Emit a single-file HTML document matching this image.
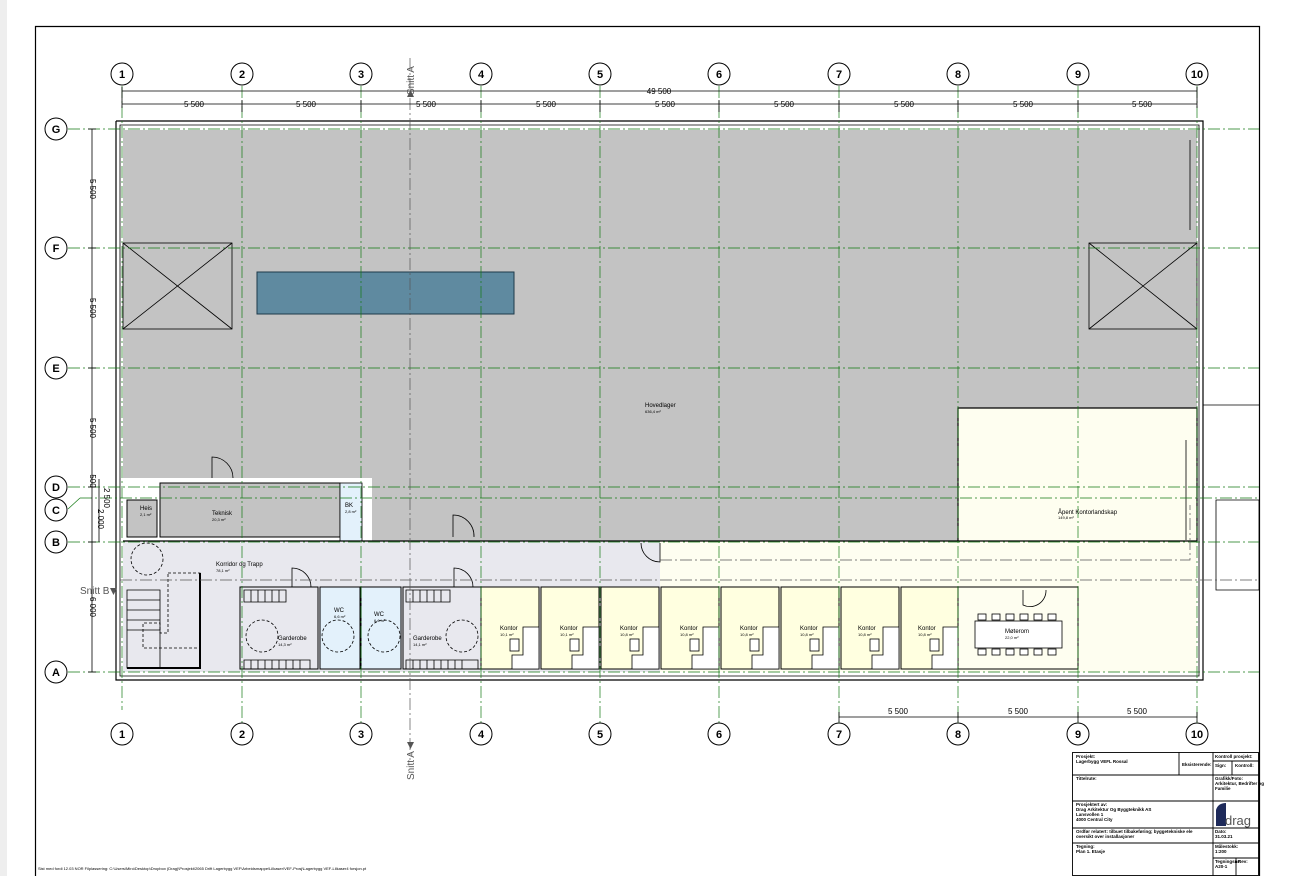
<!DOCTYPE html>
<html><head><meta charset="utf-8"><style>
html,body{margin:0;padding:0;background:#fff;}
svg{display:block;font-family:"Liberation Sans",sans-serif;}
</style></head><body>
<svg width="1289" height="876" viewBox="0 0 1289 876" xmlns="http://www.w3.org/2000/svg">
<rect x="0" y="0" width="1289" height="876" fill="#fff"/>
<rect x="0" y="0" width="7" height="876" fill="#eee"/>
<path d="M35.5 876 V26.5 H1259.5 V876" fill="none" stroke="#000" stroke-width="1.2"/>

<path d="M123 130 H1197 V408 H958 V541 H372 V478 H123 Z" fill="#c3c3c3"/>
<rect x="160" y="483" width="180" height="54" fill="#c3c3c3" stroke="#000" stroke-width="1"/>
<rect x="127" y="500" width="30" height="37" fill="#c3c3c3" stroke="#000" stroke-width="1"/>
<rect x="340" y="483" width="22" height="58" fill="#e3f1fb" stroke="#000" stroke-width="0.8"/>
<rect x="123" y="541" width="537" height="131" fill="#e8e8ee"/>
<rect x="660" y="541" width="537" height="131" fill="#fefef0"/>
<rect x="958" y="408" width="239" height="133" fill="#fefef0"/>
<rect x="240" y="587" width="78" height="82" fill="#e8e8ee" stroke="#000" stroke-width="1"/>
<rect x="320" y="587" width="40" height="82" fill="#e3f1fb" stroke="#000" stroke-width="1"/>
<rect x="361" y="587" width="40" height="82" fill="#e3f1fb" stroke="#000" stroke-width="1"/>
<rect x="403" y="587" width="78" height="82" fill="#e8e8ee" stroke="#000" stroke-width="1"/>
<g fill="#ffffe0" stroke="#000" stroke-width="1">
<rect x="481" y="587" width="58" height="82"/><rect x="541" y="587" width="58" height="82"/>
<rect x="601" y="587" width="58" height="82"/><rect x="661" y="587" width="58" height="82"/>
<rect x="721" y="587" width="58" height="82"/><rect x="781" y="587" width="58" height="82"/>
<rect x="841" y="587" width="58" height="82"/><rect x="901" y="587" width="57" height="82"/>
</g>
<rect x="958" y="587" width="120" height="82" fill="#fefef0" stroke="#000" stroke-width="1"/>
<g fill="#fff" stroke="#000" stroke-width="0.8">
<path d="M523 627 H539 V669 H512 V655 H523 Z"/><path d="M583 627 H599 V669 H572 V655 H583 Z"/>
<path d="M643 627 H659 V669 H632 V655 H643 Z"/><path d="M703 627 H719 V669 H692 V655 H703 Z"/>
<path d="M763 627 H779 V669 H752 V655 H763 Z"/><path d="M823 627 H839 V669 H812 V655 H823 Z"/>
<path d="M883 627 H899 V669 H872 V655 H883 Z"/><path d="M943 627 H958 V669 H932 V655 H943 Z"/>
<rect x="510" y="639" width="9" height="12"/><rect x="570" y="639" width="9" height="12"/>
<rect x="630" y="639" width="9" height="12"/><rect x="690" y="639" width="9" height="12"/>
<rect x="750" y="639" width="9" height="12"/><rect x="810" y="639" width="9" height="12"/>
<rect x="870" y="639" width="9" height="12"/><rect x="930" y="639" width="9" height="12"/>
<rect x="975" y="621" width="87" height="27"/>
<rect x="978" y="614" width="8" height="6"/><rect x="992" y="614" width="8" height="6"/><rect x="1006" y="614" width="8" height="6"/><rect x="1020" y="614" width="8" height="6"/><rect x="1034" y="614" width="8" height="6"/><rect x="1048" y="614" width="8" height="6"/>
<rect x="978" y="649" width="8" height="6"/><rect x="992" y="649" width="8" height="6"/><rect x="1006" y="649" width="8" height="6"/><rect x="1020" y="649" width="8" height="6"/><rect x="1034" y="649" width="8" height="6"/><rect x="1048" y="649" width="8" height="6"/>
</g>
<g fill="none" stroke="#000" stroke-width="0.8">
<path d="M244 590 H286 V602 H244 Z M251 590 V602 M258 590 V602 M265 590 V602 M272 590 V602 M279 590 V602"/>
<path d="M244 660 H310 V669 H244 Z M251 660 V669 M258 660 V669 M265 660 V669 M272 660 V669 M279 660 V669 M286 660 V669 M293 660 V669 M300 660 V669"/>
<path d="M406 590 H450 V602 H406 Z M413 590 V602 M420 590 V602 M427 590 V602 M434 590 V602 M441 590 V602"/>
<path d="M406 660 H478 V669 H406 Z M413 660 V669 M420 660 V669 M427 660 V669 M434 660 V669 M441 660 V669 M448 660 V669 M455 660 V669 M462 660 V669"/>
<path d="M127 590 H160 V668 H127 Z M127 600 H160 M127 610 H160 M127 620 H160 M127 630 H160"/>
<path d="M200 573 V668 H127" stroke-width="2"/>
<path d="M168 573 H200 V648 H143 V623 H160 V633 H168 Z" stroke-dasharray="3 2"/>
<rect x="123" y="243" width="109" height="86"/><path d="M123 243 L232 329 M232 243 L123 329"/>
<rect x="1089" y="243" width="108" height="86"/><path d="M1089 243 L1197 329 M1197 243 L1089 329"/>
<g stroke-dasharray="3 2"><circle cx="147" cy="559" r="16"/><circle cx="262" cy="636" r="16"/><circle cx="338" cy="636" r="16"/><circle cx="384" cy="636" r="16"/><circle cx="462" cy="636" r="16"/></g>
<path d="M212 478 V457 A21 21 0 0 1 233 478"/><path d="M453 537 V515 A21 21 0 0 1 474 537"/>
<path d="M292 587 V568 A19 19 0 0 1 311 587"/><path d="M454 587 V568 A19 19 0 0 1 473 587"/>
<path d="M660 543 V562 A19 19 0 0 1 641 543"/>
<path d="M1023 590 V605 A16 16 0 0 0 1046 590"/>
<path d="M116 121 H1203 V408 M116 121 V680 H1203 V408" stroke-width="1.2"/>
<path d="M120 125 H1199 V676 H120 Z" stroke-width="0.8"/>
<path d="M958 408 H1197 V541 H958 Z M123 541 H958 M958 408 V541" stroke-width="1.2"/>
<path d="M1203 405 H1259 M1216 500 H1259 V590 H1216 Z"/>
<path d="M1190 140 V230 M1186 440 V540"/>
</g>
<rect x="257" y="272" width="257" height="42" fill="#5f8aa0" stroke="#1e3a4a" stroke-width="1"/>

<g stroke="#137a13" stroke-width="0.7" stroke-dasharray="12 3 2 3" fill="none">
<path d="M122 86 V710 M242 86 V745 M361 86 V745 M481 86 V745 M600 86 V745 M719 86 V745 M839 86 V745 M958 86 V745 M1078 86 V745 M1197 86 V745"/>
<path d="M68 129 H1259 M68 248 H1259 M68 368 H1259 M68 487 H1259 M80 498 H1259 M68 542 H1259 M68 672 H1259"/>
</g>
<path d="M120 580 H1259 M410 58 V760" stroke="#555" stroke-width="0.7" stroke-dasharray="12 3 2 3" fill="none"/>
<path d="M68 509 L80 498" stroke="#137a13" stroke-width="0.7"/>
<path d="M660 560 H1190 V505" stroke="#555" stroke-width="0.7" stroke-dasharray="12 3 2 3" fill="none"/>

<g stroke="#000" stroke-width="0.8" fill="none">
<path d="M122 91 H1197 M122 104 H1197 M92 129 V672 M99 479 V542"/>
<path d="M122 87 V108 M242 100 V112 M361 100 V112 M481 100 V112 M600 100 V112 M719 100 V112 M839 100 V112 M958 100 V112 M1078 100 V112 M1197 87 V108"/>
<path d="M88 129 H96 M88 248 H96 M88 368 H96 M88 487 H96 M88 542 H96 M88 672 H96"/>
<path d="M839 717 H1197 M839 712 V722 M958 712 V722 M1078 712 V722 M1197 712 V722"/>
</g>
<g font-size="8" fill="#000" text-anchor="middle">
<text x="659" y="94">49 500</text>
<text x="194" y="107">5 500</text><text x="306" y="107">5 500</text><text x="426" y="107">5 500</text><text x="546" y="107">5 500</text><text x="665" y="107">5 500</text><text x="784" y="107">5 500</text><text x="904" y="107">5 500</text><text x="1023" y="107">5 500</text><text x="1142" y="107">5 500</text>
<text x="898" y="714">5 500</text><text x="1018" y="714">5 500</text><text x="1137" y="714">5 500</text>
<text transform="translate(90,189) rotate(90)">5 500</text>
<text transform="translate(90,308) rotate(90)">5 500</text>
<text transform="translate(90,428) rotate(90)">5 500</text>
<text transform="translate(90,481) rotate(90)">500</text>
<text transform="translate(98,519) rotate(90)">2 000</text>
<text transform="translate(104,498) rotate(90)">2 500</text>
<text transform="translate(90,607) rotate(90)">6 000</text>
</g>
<g fill="#555" font-size="10">
<text transform="translate(414,95) rotate(-90)">Snitt A</text>
<text transform="translate(414,780) rotate(-90)">Snitt A</text>
<text x="80" y="594">Snitt B</text>
<path d="M407 97 L414 97 L410.5 90 Z M407 742 L414 742 L410.5 749 Z M110 588 L117 588 L113.5 595 Z"/>
</g>

<g fill="#fff" stroke="#000" stroke-width="1">
<circle cx="122" cy="74" r="11"/><circle cx="242" cy="74" r="11"/><circle cx="361" cy="74" r="11"/><circle cx="481" cy="74" r="11"/><circle cx="600" cy="74" r="11"/><circle cx="719" cy="74" r="11"/><circle cx="839" cy="74" r="11"/><circle cx="958" cy="74" r="11"/><circle cx="1078" cy="74" r="11"/><circle cx="1197" cy="74" r="11"/>
<circle cx="122" cy="734" r="11"/><circle cx="242" cy="734" r="11"/><circle cx="361" cy="734" r="11"/><circle cx="481" cy="734" r="11"/><circle cx="600" cy="734" r="11"/><circle cx="719" cy="734" r="11"/><circle cx="839" cy="734" r="11"/><circle cx="958" cy="734" r="11"/><circle cx="1078" cy="734" r="11"/><circle cx="1197" cy="734" r="11"/>
<circle cx="56" cy="129" r="11"/><circle cx="56" cy="248" r="11"/><circle cx="56" cy="368" r="11"/><circle cx="56" cy="487" r="11"/><circle cx="56" cy="510" r="11"/><circle cx="56" cy="542" r="11"/><circle cx="56" cy="672" r="11"/>
</g>
<g font-size="11" font-weight="bold" text-anchor="middle" fill="#000">
<text x="122" y="78">1</text><text x="242" y="78">2</text><text x="361" y="78">3</text><text x="481" y="78">4</text><text x="600" y="78">5</text><text x="719" y="78">6</text><text x="839" y="78">7</text><text x="958" y="78">8</text><text x="1078" y="78">9</text><text x="1197" y="78">10</text>
<text x="122" y="738">1</text><text x="242" y="738">2</text><text x="361" y="738">3</text><text x="481" y="738">4</text><text x="600" y="738">5</text><text x="719" y="738">6</text><text x="839" y="738">7</text><text x="958" y="738">8</text><text x="1078" y="738">9</text><text x="1197" y="738">10</text>
<text x="56" y="133">G</text><text x="56" y="252">F</text><text x="56" y="372">E</text><text x="56" y="491">D</text><text x="56" y="514">C</text><text x="56" y="546">B</text><text x="56" y="676">A</text>
</g>

<g font-size="6" fill="#000">
<text x="645" y="407">Hovedlager</text><text x="645" y="413" font-size="4">636,4 m²</text>
<text x="1058" y="514">Åpent Kontorlandskap</text><text x="1058" y="519" font-size="4">149,8 m²</text>
<text x="140" y="510">Heis</text><text x="140" y="516" font-size="4">2,1 m²</text>
<text x="212" y="515">Teknisk</text><text x="212" y="521" font-size="4">20,3 m²</text>
<text x="345" y="507">BK</text><text x="345" y="513" font-size="4">2,8 m²</text>
<text x="216" y="566">Korridor og Trapp</text><text x="216" y="572" font-size="4">78,1 m²</text>
<text x="278" y="640">Garderobe</text><text x="278" y="646" font-size="4">14,3 m²</text>
<text x="334" y="612">WC</text><text x="334" y="618" font-size="4">6,6 m²</text>
<text x="374" y="616">WC</text><text x="374" y="622" font-size="4">6,6 m²</text>
<text x="413" y="640">Garderobe</text><text x="413" y="646" font-size="4">14,1 m²</text>
<text x="500" y="630">Kontor</text><text x="500" y="636" font-size="4">10,1 m²</text>
<text x="560" y="630">Kontor</text><text x="560" y="636" font-size="4">10,1 m²</text>
<text x="620" y="630">Kontor</text><text x="620" y="636" font-size="4">10,8 m²</text>
<text x="680" y="630">Kontor</text><text x="680" y="636" font-size="4">10,8 m²</text>
<text x="740" y="630">Kontor</text><text x="740" y="636" font-size="4">10,8 m²</text>
<text x="800" y="630">Kontor</text><text x="800" y="636" font-size="4">10,8 m²</text>
<text x="858" y="630">Kontor</text><text x="858" y="636" font-size="4">10,8 m²</text>
<text x="918" y="630">Kontor</text><text x="918" y="636" font-size="4">10,8 m²</text>
<text x="1005" y="633">Møterom</text><text x="1005" y="639" font-size="4">22,0 m²</text>
</g>

<g fill="none" stroke="#000" stroke-width="0.9">
<rect x="1072.5" y="752.5" width="186" height="123"/>
<path d="M1072 775 H1259 M1072 801 H1259 M1072 828 H1259 M1072 843 H1259 M1213 752 V876 M1179 752 V775 M1213 761 H1259 M1232 761 V775 M1213 858 H1259 M1236 858 V876"/>
</g>
<g font-size="4.5" font-weight="bold" fill="#000">
<text x="1076" y="758">Prosjekt:</text><text x="1076" y="763">Lagerbygg VEFL Rossal</text>
<text x="1182" y="766">Eksisterende:</text>
<text x="1215" y="758">Kontroll prosjekt:</text><text x="1215" y="767">Sign:</text><text x="1235" y="767">Kontroll:</text>
<text x="1076" y="780">Tittelrute:</text>
<text x="1215" y="780">Grafikk/Foto:</text><text x="1215" y="785">Arkitektur, Bedrifter og</text><text x="1215" y="790">Familie</text>
<text x="1076" y="806">Prosjektert av:</text><text x="1076" y="811">Drag Arkitektur Og Byggteknikk AS</text><text x="1076" y="816">Lansvollen 1</text><text x="1076" y="821">4000 Central City</text>
<text x="1076" y="833">Ordfør relatert: tilbuet tilbakeføring; byggetekniske ele</text><text x="1076" y="838">oversikt over installasjoner</text>
<text x="1215" y="833">Dato:</text><text x="1215" y="838">31.03.21</text>
<text x="1076" y="848">Tegning:</text><text x="1076" y="853">Plan 1. Etasje</text>
<text x="1215" y="848">Målestokk:</text><text x="1215" y="853">1:200</text>
<text x="1215" y="863">Tegningsnr:</text><text x="1215" y="868">A20-1</text><text x="1238" y="863">Rev:</text>
</g>
<path d="M1216 810 Q1218 803 1226 803 L1226 826 L1216 826 Z" fill="#1e2a5a"/>
<text x="1225" y="825" font-size="13" fill="#555">drag</text>
<text x="38" y="870" font-size="4" fill="#000">Sist med fordi 12.03 NOR   Filplassering: C:\Users\Miro\Desktop\Dropbox (Drag)\Prosjekt\2065 Drift Lagerbygg VEF\Arbeidsmappe\Lilkaser\VEF-Prosj\Lagerbygg VEF-Lilkaser4 forsjon.pt</text>
</svg>
</body></html>
